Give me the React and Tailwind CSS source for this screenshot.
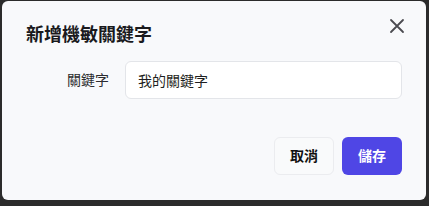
import React from 'react';

export default function App() {
  return (
    <div className="w-[429px] h-[206px] bg-[#2b2b2b] pt-px pl-[2px] pr-[3px] pb-[6px] font-['Inter','Noto_Sans_CJK_TC',sans-serif]">
      <div className="relative h-full rounded-md bg-[#f8f9fb] flex flex-col px-6 pt-[20px] pb-[25px]">
        {/* Title */}
        <h2 className="text-[18px] leading-7 font-bold text-[#1a1a1d]">新增機敏關鍵字</h2>

        {/* Close */}
        <button className="absolute top-[11px] right-[15px] w-7 h-7 flex items-center justify-center text-[#4b4b50]">
          <svg width="16" height="16" viewBox="0 0 16 16" fill="none" stroke="currentColor" strokeWidth="1.8" strokeLinecap="round">
            <path d="M2 2l12 12M14 2L2 14" />
          </svg>
        </button>

        {/* Form row */}
        <div className="flex items-center gap-4 mt-[12px] pl-[38px]">
          <label className="text-sm text-[#2d2d30] w-[45px] text-right">關鍵字</label>
          <input
            className="flex-1 h-[38px] rounded-md border border-[#e3e5e9] bg-white px-3 text-sm text-[#1f1f22] outline-none"
            defaultValue="我的關鍵字"
          />
        </div>

        {/* Actions */}
        <div className="mt-auto flex justify-end gap-2">
          <button className="h-[38px] px-[15px] rounded-md border border-[#ebecef] bg-[#f9fafb] text-sm font-bold text-[#111]">取消</button>
          <button className="h-[38px] px-4 rounded-md bg-[#4f46e5] text-sm font-bold text-white">儲存</button>
        </div>
      </div>
    </div>
  );
}
